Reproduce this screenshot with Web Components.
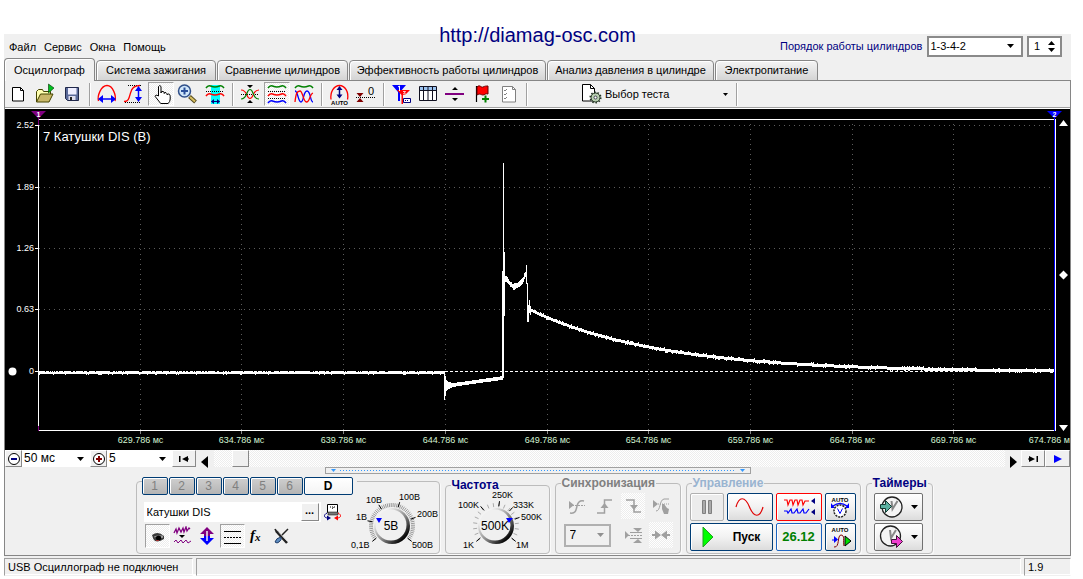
<!DOCTYPE html>
<html lang="ru">
<head>
<meta charset="utf-8">
<title>Осциллограф</title>
<style>
  body { margin: 0; padding: 34px 12px 5px 4px; background: #fff; font: 11px/13px "Liberation Sans", Arial, sans-serif; color: #000; }
</style>
</head>
<body>
<osc-app></osc-app>
<script>
const BASE = `
  *, *::before, *::after { box-sizing: border-box; }
  button, input, select { font: inherit; color: inherit; margin: 0; padding: 0; border: 0; background: none; border-radius: 0; outline: 0; }
  svg { display: block; }
  .dither { background: conic-gradient(#fff 25%, #ededed 0 50%, #fff 0 75%, #ededed 0) 0 0 / 2px 2px; }
`;
function define(name, css, html, setup) {
  const tpl = document.createElement('template');
  tpl.innerHTML = `<style>${BASE}${css}</style>${html}`;
  customElements.define(name, class extends HTMLElement {
    constructor() {
      super();
      this.attachShadow({ mode: 'open' }).append(tpl.content.cloneNode(true));
    }
    connectedCallback() {
      if (setup && !this.ready) { this.ready = true; setup(this, this.shadowRoot); }
    }
  });
}

const wave = (y, c, x = 4) => `<path d="M${x} ${y + 1}q2 -3 4.500 -2t4.500 1t4.500 -1t4.500 2" fill="none" stroke="${c}" stroke-width="1.500"/>`;
const dots = (y, x1 = 4, x2 = 22) => `<path d="M${x1} ${y}H${x2}" stroke="#000" stroke-dasharray="1 1" shape-rendering="crispEdges"/>`;
/* name: [width, height, markup] */
const ICONS = {
  new: [26, 24, `<path d="M7.500 5.500h8l3 3v10.500h-11z" fill="#fff" stroke="#000"/><path d="M15.500 5.500v3h3" fill="none" stroke="#000"/>`],
  open: [26, 24, `<path d="M4.500 20V9.500l2-2h4l1 2h7V12" fill="#ffffb0" stroke="#444400"/><path d="M4.500 20l4-8h12.500l-4 8z" fill="#c9b86a" stroke="#444400"/><path d="M16.500 2v9l5.500-5z" fill="#00c020" stroke="#003000" stroke-width=".6"/>`],
  save: [26, 24, `<path d="M6.500 5.500h13v13h-11l-2-2z" fill="#5a6a9a" stroke="#20284a"/><path d="M9 6h8.500v6.500H9z" fill="#eef"/><path d="M9.500 14h7v4h-7z" fill="#dde"/><path d="M11 15h2v3h-2z" fill="#222"/>`],
  period: [26, 24, `<path d="M4.500 19C3 14 7 3.500 13 3.500S22.500 14 21 19" fill="none" stroke="#f00" stroke-width="1.300"/><path d="M6 17H20" stroke="#00f" stroke-width="1.500"/><path d="M4 17l5-4v8zM22 17l-5-4v8z" fill="#00f"/>`],
  ampl: [26, 24, `${dots(3.5, 7, 20)}${dots(20.5, 4, 20)}<path d="M3 19.500c4.500 0 5-3 6.500-8.500s3.500-7 9.500-7.500" fill="none" stroke="#f00" stroke-width="1.300"/><path d="M17.500 6V18" stroke="#00f" stroke-width="1.500"/><path d="M17.500 4l-3.500 5h7zM17.500 20l-3.500-5h7z" fill="#00f"/>`],
  hand: [26, 24, `<path d="M10.500 14V4.500q1.200-2 2.500 0V11q0-2 2-1.500t1 2q1-1.500 2-.8t1 2q1.200-1.300 2.200-.5t1 2V17q0 2.500-2 4.500h-7.500l-5.500-7q0-2.500 3.300-.5z" fill="#fff" stroke="#000"/>`],
  zoom: [26, 24, `<path d="M14.500 14.500l6 5.500" stroke="#544a20" stroke-width="4"/><path d="M15 15l5 4.500" stroke="#d8c060" stroke-width="2"/><circle cx="9.500" cy="9" r="6" fill="#cfe6fa" stroke="#30508a" stroke-width="1.500"/><path d="M6 9h7M9.500 5.500v7" stroke="#2a4f9a" stroke-width="2"/>`],
  range: [26, 24, `<path d="M9 3h9v19H9z" fill="#0ff"/>${wave(5, '#008000')}${dots(9.5)}${wave(13, '#f00')}<path d="M9.500 19.500h8" stroke="#000080"/><path d="M9 19.500l3-2.500v5zM18 19.500l-3-2.500v5z" fill="#000080"/>`],
  merge: [26, 24, `${dots(12.5)}<path d="M4 8c7 0 5 8.500 9 8.500s2-8.500 9-8.500" fill="none" stroke="#f00" stroke-width="1.200"/><path d="M4 17c7 0 5-9.500 9-9.500s2 9.500 9 9.500" fill="none" stroke="#008000" stroke-width="1.200"/><path d="M10 3h6l-3 3zM10 21h6l-3-3z"/>`],
  split: [26, 24, `${wave(5, '#008000')}${dots(9.5)}${wave(13, '#f00')}${dots(16.5)}${wave(20, '#00f')}`],
  overlay: [26, 24, `${wave(5, '#008000')}<path d="M4 9c3 0 3 11 6 11s2-11 6-11 3 11 6 11" fill="none" stroke="#00f" stroke-width="1.300"/><path d="M4 20c1-9 2-11 5-11s3 11 6.500 11 3-8 6.500-9" fill="none" stroke="#f00" stroke-width="1.300"/>`],
  auto: [26, 24, `<path d="M5 17.500C4 10 8 3.500 13.500 3.500S23 10 21.500 17.500" fill="none" stroke="#f00" stroke-width="1.300"/><path d="M13.500 6v9" stroke="#000080" stroke-width="1.500"/><path d="M13.500 4l-3 4h6zM13.500 16.500l-3-4h6z" fill="#000080"/><text x="13.500" y="22.500" font-size="6" font-weight="bold" text-anchor="middle">AUTO</text>`],
  zero: [26, 24, `<path d="M3.500 11h7l-3.500 4zM3.500 20h7l-3.500-4z" fill="#800000"/>${dots(15.5, 3, 22)}<text x="15" y="13" font-size="11">0</text>`],
  marks: [26, 24, `<path d="M4 3h14l-6 7v9h-2v-9z" fill="#00f"/><path d="M9 8h13l-5 5h-2v9h-1.500v-9z" fill="#f00"/><path d="M10 5l1.500-1v5" stroke="#fff" fill="none"/><path d="M15 9.500h2.500l-2 2.500h2.500" stroke="#fff" fill="none" stroke-width=".8"/><path d="M15.500 16.500h7v4h-7z" fill="#fff" stroke="#000080"/><path d="M17 18.500h4" stroke="#000080" stroke-dasharray="1 1"/>`],
  table: [26, 24, `<path d="M4.500 4.500h17v14h-17z" fill="#fff" stroke="#101020"/><path d="M5 5h16v3H5z" fill="#9cc4f0"/><path d="M5 8.500h16M8.500 5v13M13 5v13M17.500 5v13" stroke="#101020" fill="none"/>`],
  divider: [26, 24, `<path d="M3 12h19" stroke="#800080" stroke-width="2"/><path d="M10 8h6l-3-3zM10 16h6l-3 3z"/>`],
  flag: [26, 24, `<path d="M7.500 4v16" stroke="#000" stroke-width="1.200"/><path d="M8 5c3-3 4 1 6 0s3-1 5-1v8c-3-1-3 1-5 1s-3-2-6 0z" fill="#f00" stroke="#600"/><path d="M13 17h7M16.500 13.500v7" stroke="#008000" stroke-width="2"/>`],
  list: [26, 24, `<path d="M6.500 4.500h10l3 3v12.500h-13z" fill="#fff" stroke="#808080"/><path d="M16.500 4.500v3h3" fill="none" stroke="#808080"/><path d="M8 8l1 1 2-2M8 12l1 1 2-2M8 16l1 1 2-2" fill="none" stroke="#808080"/>`],
  test: [22, 22, `<path d="M2.500 1.500h8l4 4v12.500h-12z" fill="#fff" stroke="#000"/><path d="M10.500 1.500v4h4" fill="none" stroke="#000"/><circle cx="15.500" cy="14.500" r="4.500" fill="#b8d0b0" stroke="#223322" stroke-width="1"/><circle cx="15.500" cy="14.500" r="5.300" fill="none" stroke="#223322" stroke-width="1.500" stroke-dasharray="1.500 1.800"/><circle cx="15.500" cy="14.500" r="1.500" fill="#fff" stroke="#445"/>`],
  down: [7, 4, `<path d="M0 0h7L3.500 4z"/>`],
  downs: [5, 3, `<path d="M0 0h5L2.500 3z"/>`],
  up: [7, 4, `<path d="M0 4h7L3.500 0z"/>`],
  minus: [16, 16, `<circle cx="8" cy="8" r="5.500" fill="#fff" stroke="#000"/><path d="M5 8h6" stroke="#000080" stroke-width="2"/>`],
  plus: [16, 16, `<circle cx="8" cy="8" r="5.500" fill="#fff" stroke="#000"/><path d="M5 8h6M8 5v6" stroke="#800000" stroke-width="2"/>`],
  first: [12, 8, `<path d="M1 1h1.500v6H1zM10 1v6L4 4zM10 3.500h1v1h-1z"/>`],
  last: [12, 8, `<path d="M9.500 1H11v6H9.500zM2 1v6l6-3zM1 3.500h1v1H1z"/>`],
  left: [8, 12, `<path d="M7 0v12L0 6z"/>`],
  right: [8, 12, `<path d="M1 0v12l7-6z"/>`],
  run: [8, 8, `<path d="M0 0v8l8-4z" fill="#00f"/>`],
  swap: [20, 20, `<path d="M4.500 2.500h10v8h-10z" fill="#fff" stroke="#000"/><path d="M5 10h10v3H5z" fill="#777" stroke="#000" stroke-width=".5"/><path d="M7 5h5M9 7l2-2" stroke="#000" stroke-dasharray="1 1"/><path d="M4 11c-4 2-3 5 1 5" stroke="#000080" fill="none"/><path d="M4 13.500v5l4-2.500z" fill="#000080"/><path d="M15 11c4 2 3 5-1 5" stroke="#f00" fill="none"/><path d="M15 13.500v5l-4-2.500z" fill="#f00"/>`],
  eye: [24, 22, `<path d="M7 10q6-4.500 12 1v3q-5 3.500-9 2-2-1.500-3-6z" fill="#3c3c3c"/><path d="M9 12q4-2 9-1" stroke="#999" fill="none"/><circle cx="13.500" cy="13" r="2.500" fill="#000"/><path d="M11 15.500h3" stroke="#a03030"/><path d="M16 12h2" stroke="#ddd"/>`],
  noise: [20, 20, `<path d="M2 7l2-4 1 4 2-5 2 4 2-4 1 4 2-5 1 4 2-3 1 1" fill="none" stroke="#800080" stroke-width="1.300"/><path d="M7 9h6l-3 3z"/><path d="M2 16l2-2 2 3 3-3 2 3 3-3 2 3 3-2" fill="none" stroke="#800080"/>`],
  updown: [20, 20, `<path d="M10 1l7 7h-4v2H7V8H3z" fill="#800080"/><path d="M10 19l7-7h-4v-2H7v2H3z" fill="#00f"/><path d="M10 5v10" stroke="#f0f0f0" stroke-width="1.500"/>`],
  lines: [24, 22, `<path d="M4 6.500h17M4 18.500h17" stroke="#000"/><path d="M4 12.500h17" stroke="#000" stroke-dasharray="2 1"/>`],
  fx: [20, 20, `<text x="3" y="14" font-family="Liberation Serif, serif" font-size="15" font-weight="bold" font-style="italic">f</text><text x="8" y="15" font-family="Liberation Serif, serif" font-size="11" font-weight="bold" font-style="italic">x</text>`],
  tools: [20, 20, `<path d="M4 5l11 12" stroke="#222" stroke-width="2.500"/><path d="M3 3q1 3 4 3M16 3l-8 8" stroke="#222" fill="none" stroke-width="1.500"/><path d="M5 4l10 11" stroke="#ccc"/><path d="M9 11q-5 1-6 5 2 2 4 0 3-2 2-5z" fill="#5c8cc0" stroke="#24406a"/>`],
  s1: [20, 20, `<g fill="none" stroke="#a0a0a0"><path d="M3 9.500h16" stroke-dasharray="2 1"/><path d="M4 17c6 1 6-3 7-7s3-6 7-5" stroke-width="1.500"/></g><path d="M3 5v8l5-4z" fill="#a0a0a0"/>`],
  s2: [20, 20, `<path d="M3 17h7.500V4H18" stroke="#a0a0a0" fill="none" stroke-width="1.500"/><path d="M10.500 7l-4 5h8z" fill="#a0a0a0"/>`],
  s3: [24, 22, `<path d="M5 5h8v12h7" stroke="#a0a0a0" fill="none" stroke-width="1.500"/><path d="M13 15l-4-5h8z" fill="#a0a0a0"/>`],
  s4: [20, 20, `<path d="M2 4v8l5-4z" fill="#a0a0a0"/><path d="M5 8h14" stroke="#a0a0a0" stroke-dasharray="1 1"/><path d="M5 15c5 0 3-11 8-12h5" fill="none" stroke="#a0a0a0"/><path d="M11 8l2 0 3 4 2 1-1 5-4 0-2-5z" fill="#a0a0a0"/>`],
  s5: [20, 20, `<path d="M10 3h9l-4 4zM10 18h9l-4-4z" fill="#a0a0a0"/><path d="M2 6v8l4-4z" fill="#a0a0a0"/><path d="M5 10.500h14" stroke="#a0a0a0" stroke-dasharray="2 1"/><path d="M7 7.500h12M7 13.500h12" stroke="#a0a0a0"/>`],
  s6: [24, 22, `<path d="M3 11h8M21 11h-8" stroke="#a0a0a0" stroke-width="2"/><path d="M6 6.500v9l6-4.500zM18 6.500v9l-6-4.500z" fill="#a0a0a0"/>`],
  pause: [14, 18, `<path d="M2.500 2.500h3v13h-3zM8.500 2.500h3v13h-3z" fill="#aaa" stroke="#808080"/>`],
  sine: [32, 22, `<path d="M2 11C5 0 11 0 15.500 11S26 22 29 11" fill="none" stroke="#e00000" stroke-width="1.200"/>`],
  dual: [36, 20, `<path d="M3 3h3l1 5 2-5h2l1 5 2-5h2l1 5 2-5h2l1 5 2-4h4" fill="none" stroke="#f00" stroke-width="1.200"/><path d="M3 14h3l1 2 3-4 1 4h2l3-4 1 4h2l3-4 1 4h2l3-4" fill="none" stroke="#00f" stroke-width="1.200"/><path d="M34 1v6l-4-3zM34 12v6l-4-3z" fill="#000080"/>`],
  autov: [26, 24, `<text x="13" y="7" font-size="6" font-weight="bold" text-anchor="middle">AUTO</text><path d="M6 11q7-5 14 0" stroke="#00f" fill="none" stroke-width="1.500"/><path d="M4 8v5h4zM22 8v5h-4z" fill="#00f"/><circle cx="13" cy="16" r="6" fill="#fff" stroke="#222" stroke-width="1.500" stroke-dasharray="2 1"/><path d="M10.500 13.500l2.500 5 2.500-5" stroke="#00f" fill="none"/>`],
  autos: [26, 24, `<text x="13" y="7" font-size="6" font-weight="bold" text-anchor="middle">AUTO</text><path d="M5 15h4" stroke="#00f"/><path d="M7 11v7l4-3.500z" fill="#00f"/><path d="M7 22c6 1 3-12 7-12s2 6 3 11" fill="none" stroke="#800000"/><path d="M18 11v10l6-5z" fill="#00e000" stroke="#000"/>`],
  play: [12, 20, `<path d="M1 0v20l10-10z" fill="#0f0" stroke="#22a022"/>`],
  clockin: [26, 24, `<circle cx="14" cy="12" r="10" fill="#f4f4f4" stroke="#222" stroke-width="1.300"/><path d="M13.500 6l1 8 5-8" fill="none" stroke="#888" stroke-width="2"/><path d="M2.500 9.500h5v-4l6 6-6 6v-4h-5z" fill="#5ab0a0" stroke="#103830"/>`],
  clockout: [26, 24, `<circle cx="12.500" cy="11" r="10" fill="#f4f4f4" stroke="#222" stroke-width="1.300"/><path d="M12 5l1 8 5-8" fill="none" stroke="#888" stroke-width="2"/><path d="M13.500 14.500h5v-4l6 6-6 6v-4h-5z" fill="#f040d0" stroke="#401038"/>`]
};

define('osc-icon', `:host { display: inline-block; }`, `<div></div>`, (el, r) => {
  const [w, h, body] = ICONS[el.getAttribute('name')];
  r.querySelector('div').innerHTML = `<svg width="${w}" height="${h}" viewBox="0 0 ${w} ${h}" aria-hidden="true">${body}</svg>`;
});

/* Flat toolbar button, optionally latched */
define('osc-tool', `
  :host { display: block; }
  button { display: flex; align-items: center; justify-content: center; width: 100%; height: 100%; border: 1px solid transparent; }
  :host([pressed]) button { border-color: #a0a0a0 #fff #fff #a0a0a0; background: conic-gradient(#fff 25%, #ededed 0 50%, #fff 0 75%, #ededed 0) 0 0 / 2px 2px; }
  :host([flat]) button { border-color: transparent; }
`, `<button type="button"><slot></slot></button>`, (el, r) => r.querySelector('button').setAttribute('aria-label', el.getAttribute('label') || ''));

/* Framed push button */
define('osc-push', `
  :host { display: block; }
  button { display: flex; align-items: center; justify-content: center; width: 100%; height: 100%; border: 1px solid var(--edge, #003c74); border-radius: 2px; background: var(--face, linear-gradient(#fff, #f2f2f2 50%, #dcdcdc)); box-shadow: inset 1px 1px #fff; }
`, `<button type="button"><slot></slot></button>`, (el, r) => {
  const b = r.querySelector('button');
  if (el.hasAttribute('label')) b.setAttribute('aria-label', el.getAttribute('label'));
});

define('osc-select', `
  :host { display: flex; align-items: center; gap: 5px; }
  label { color: #000080; white-space: nowrap; }
  label:empty { display: none; }
  .box { display: grid; grid-template-columns: 1fr auto; align-items: center; flex: 1; height: 100%; background: var(--face, #fff); border: var(--line, 0); }
  select { grid-area: 1 / 1 / 2 / 3; appearance: none; width: 100%; height: 100%; padding: 0 var(--pad, 2px); }
  osc-icon { grid-area: 1 / 2; margin-right: var(--arrow, 6px); pointer-events: none; fill: var(--ink, #000); }
`, `<label for="s"></label><div class="box"><select id="s"></select><osc-icon name="down"></osc-icon></div>`, (el, r) => {
  const s = r.querySelector('select');
  s.add(new Option(el.getAttribute('value')));
  r.querySelector('label').textContent = el.getAttribute('label') || '';
  if (!el.hasAttribute('label')) s.setAttribute('aria-label', el.getAttribute('hint'));
});

define('osc-spinner', `
  :host { display: flex; border: 2px solid #8a8a8a; background: #fff; }
  input { flex: 1; min-width: 0; padding-left: 5px; }
  div { display: grid; align-content: center; gap: 3px; padding-right: 5px; }
  button { display: flex; align-items: center; }
  osc-icon { display: block; }
`, `<input type="text" value="1" aria-label="Номер цилиндра"><div><button type="button" aria-label="Больше"><osc-icon name="up"></osc-icon></button><button type="button" aria-label="Меньше"><osc-icon name="down"></osc-icon></button></div>`);

define('osc-header', `
  :host { display: flex; align-items: center; height: 24px; padding: 0 9px 0 5px; position: relative; }
  nav { display: flex; gap: 8px; padding-top: 2px; flex: 1; }
  nav a { color: #000; text-decoration: none; }
  osc-select { width: 243px; height: 21px; margin-right: 4px; --line: 2px solid #8a8a8a; --arrow: 7px; --pad: 1px; }
  osc-spinner { width: 35px; height: 21px; }
  .site { position: absolute; left: 0; right: 0; top: -11px; text-align: center; pointer-events: none; font-size: 20px; line-height: 24px; color: #000080; }
  .site a { color: inherit; text-decoration: none; pointer-events: auto; }
`, `<nav><a href="#file">Файл</a><a href="#service">Сервис</a><a href="#windows">Окна</a><a href="#help">Помощь</a></nav>
<osc-select label="Порядок работы цилиндров" value="1-3-4-2"></osc-select>
<osc-spinner></osc-spinner>
<div class="site"><a href="http://diamag-osc.com">http://diamag-osc.com</a></div>`);

define('osc-tabs', `
  :host { display: grid; grid-template-columns: 91px 120px 131px 197px 167px 103px; align-items: end; height: 23px; gap: 1px; box-shadow: inset 0 -1px #868686; }
  button { height: 21px; border: 1px solid #868686; border-radius: 4px 4px 0 0; background: linear-gradient(#f4f4f4, #d4d4d4); white-space: nowrap; box-shadow: inset 1px 1px #fff; }
  button[aria-selected=true] { height: 23px; border-bottom: 0; background: #f0f0f0; }
`, `<button role="tab" aria-selected="true">Осциллограф</button><button role="tab">Система зажигания</button><button role="tab">Сравнение цилиндров</button><button role="tab">Эффективность работы цилиндров</button><button role="tab">Анализ давления в цилиндре</button><button role="tab">Электропитание</button>`);

define('osc-toolbar', `
  :host { display: flex; align-items: center; height: 28px; border-bottom: 1px solid #fff; box-shadow: inset 0 -1px #a0a0a0; padding-bottom: 1px; }
  osc-tool { width: 26px; margin-right: 1px; height: 24px; }
  i { width: 2px; height: 23px; margin: 0 3px; background: #a0a0a0; border-right: 1px solid #fff; }
  .test { display: flex; align-items: center; gap: 3px; width: 150px; height: 24px; margin-left: 49px; padding-right: 2px; white-space: nowrap; }
  .test span { flex: 1; text-align: left; }
  .test + i { margin-left: 6px; }
`, `<span id="bar" style="display:contents"></span>`, (el, r) => {
  const groups = [
    [['new', 'Новый'], ['open', 'Открыть'], ['save', 'Сохранить']],
    [['period', 'Период'], ['ampl', 'Амплитуда'], ['hand', 'Перемещение', 1], ['zoom', 'Лупа'], ['range', 'Диапазон']],
    [['merge', 'Совместить'], ['split', 'Разделить', 1], ['overlay', 'Наложить']],
    [['auto', 'Автомасштаб'], ['zero', 'Ноль']],
    [['marks', 'Маркеры'], ['table', 'Таблица'], ['divider', 'Линия'], ['flag', 'Добавить метку'], ['list', 'Отчёт']]
  ];
  r.getElementById('bar').innerHTML = groups.map(g => g.map(([n, l, p]) =>
    `<osc-tool label="${l}" ${p ? 'pressed' : ''}><osc-icon name="${n}"></osc-icon></osc-tool>`).join('') + '<i></i>').join('') +
    `<button type="button" class="test"><osc-icon name="test"></osc-icon><span>Выбор теста</span><osc-icon name="downs"></osc-icon></button><i></i>`;
});

/* Signal screen: the drawing units run from (5,109) to (1070,450) */
define('osc-plot', `
  :host { display: block; background: #000; }
  svg { width: 100%; height: auto; }
  text { font-family: "Liberation Sans", Arial, sans-serif; font-size: 9px; fill: #fff; }
  .x { fill: #d4f4d4; text-anchor: middle; }
  .y, .x.last { text-anchor: end; }
  .name { font-size: 13px; }
  .flag { font-size: 7px; font-weight: bold; text-anchor: middle; }
  .px { shape-rendering: crispEdges; fill: none; }
`, `<svg viewBox="5 109 1065 341" role="img" aria-label="Катушки DIS"><g id="grid"></g><path id="sig" class="px" stroke="#fff"/>
<path class="px" stroke="#fff" d="M38.500 119v312M38 119.500H1056M38 430.500H1056M1055.500 119V431"/>
<path class="px" stroke="#00f" d="M1054.500 112V431"/>
<path class="px" stroke="#800080" d="M38.500 112v13M38.500 426v5"/>
<path d="M31 111h15l-7 7h-1z" fill="#800080"/><path d="M1047 111h15l-7 7h-1z" fill="#00f"/>
<text class="flag" x="38.500" y="117">1</text><text class="flag" x="1054.500" y="117">2</text>
<path d="M1059 126h9l-4.500-6zM1059 425h9l-4.500 6zM1059 275l4.500-4.500 4.500 4.500-4.500 4.500z" fill="#fff"/>
<circle cx="12.500" cy="371.500" r="4" fill="#fff"/>
<text class="name" x="43" y="141">7 Катушки DIS (В)</text></svg>`, (el, r) => {
  const xs = [140, 241, 343, 445, 547, 648, 750, 852, 953];
  const ys = [[125, '2.52'], [187, '1.89'], [248, '1.26'], [309, '0.63'], [371, '0']];
  let g = '';
  ys.forEach(([y, t]) => {
    g += `<text class="y" x="34" y="${y + 3}">${t}</text><path class="px" stroke="#fff" d="M35 ${y}.500h3"/>`;
    if (y < 371) g += `<path class="px" stroke="#5c5c5c" stroke-dasharray="1 4" d="M39 ${y}.500H1054"/>`;
  });
  g += `<path class="px" stroke="#fff" stroke-dasharray="3 2" d="M445 371.500H1054"/>`;
  xs.forEach((x, i) => {
    g += `<text class="x" x="${x}.500" y="443">${(629.786 + 5 * i).toFixed(3)} мс</text>`;
    g += `<path class="px" stroke="#5c5c5c" stroke-dasharray="1 4" d="M${x}.500 124V430"/><path class="px" stroke="#888" d="M${x}.500 431v3"/>`;
  });
  g += `<text class="x last" x="1070" y="443">674.786 м</text>`;
  r.getElementById('grid').innerHTML = g;

  let seed = 7;
  const rnd = () => (seed = (seed * 16807) % 2147483647) / 2147483647;
  let d = '';
  const bar = (x, a, b) => { d += `M${x}.500 ${Math.round(a)}V${Math.round(b)}`; };
  for (let x = 39; x < 444; x++) bar(x, 371 + (rnd() > .8), 374 + (rnd() > .9));
  bar(444, 371, 400);
  for (let x = 445; x < 503; x++) {
    const c = 386 - (x - 445) * .14, a = 1.8 + 8 * Math.exp(-(x - 445) / 3) * (.6 + .4 * rnd());
    bar(x, c - a, c + a);
  }
  bar(502, 271, 378); bar(503, 163, 378); bar(504, 252, 316);
  for (let x = 505; x < 526; x++) {
    const c = x < 514 ? 279 + (x - 505) : x < 522 ? 287 - (x - 514) * .6 : 282 - (x - 522) * 2.5;
    bar(x, c - 2 - 2 * rnd(), c + 2 + rnd());
  }
  bar(526, 265, 284); bar(527, 283, 322); bar(528, 305, 322); bar(529, 300, 313); bar(530, 306, 315);
  for (let x = 531; x < 1054; x++) {
    const c = 372 - 62 * Math.exp(-(x - 530) / 130);
    bar(x, c - 1.5 - (rnd() > .85), c + 1.5 + (rnd() > .85));
  }
  r.getElementById('sig').setAttribute('d', d);
});

define('osc-scroll', `
  :host { display: flex; height: 17px; background: #fff; }
  osc-select { font-size: 12px; }
  button { display: flex; align-items: center; justify-content: center; background: #f0f0f0; border: 1px solid; border-color: #fff #888 #888 #fff; }
  .track { flex: 1; display: flex; }
  .flat { border-color: transparent; padding-top: 6px; width: 16px; }
`, `<button style="width:17px" aria-label="Медленнее"><osc-icon name="minus"></osc-icon></button>
<osc-select value="50  мс" hint="Развёртка" style="width:68px"></osc-select>
<button style="width:17px" aria-label="Быстрее"><osc-icon name="plus"></osc-icon></button>
<osc-select value="5" hint="Усиление" style="width:65px"></osc-select>
<button style="width:24px" aria-label="В начало"><osc-icon name="first"></osc-icon></button>
<button class="flat" style="width:18px" aria-label="Влево"><osc-icon name="left"></osc-icon></button>
<div class="track dither"><button style="width:17px;margin-left:18px" aria-label="Положение"></button></div>
<button class="flat" aria-label="Вправо"><osc-icon name="right"></osc-icon></button>
<button style="width:24px" aria-label="В конец"><osc-icon name="last"></osc-icon></button>
<button style="width:25px" aria-label="Следить"><osc-icon name="run"></osc-icon></button>`);

define('osc-splitter', `
  :host { display: flex; align-items: center; justify-content: space-between; width: 40%; height: 7px; margin: 0 auto; padding: 0 5px; border: 1px solid #a0a0a0; fill: #3399ff; }
  span { flex: 1; margin: 0 4px; height: 1px; background: repeating-linear-gradient(90deg, #3399ff 0 1px, transparent 1px 3px); }
`, `<osc-icon name="downs"></osc-icon><span></span><osc-icon name="downs"></osc-icon>`);

define('osc-group', `
  :host { display: block; }
  fieldset { margin: 0; min-width: 0; border: 1px solid #bcbcbc; border-radius: 4px; padding: 3px 0 2px; box-shadow: 1px 1px #fafafa; }
  legend { margin-left: 5px; padding: 0 1px; font: bold 12px/14px "Liberation Sans", Arial, sans-serif; color: var(--title, #000080); }
`, `<fieldset><legend></legend><slot></slot></fieldset>`, (el, r) => {
  const l = r.querySelector('legend');
  if (el.hasAttribute('label')) l.textContent = el.getAttribute('label'); else l.remove();
});

/* Rotary knobs; drawing units start at the given origin */
define('osc-knob', `:host { display: block; } svg { overflow: visible; } text { font: 9px "Liberation Sans", Arial, sans-serif; }`, `<div></div>`, (el, r) => {
  const volt = el.getAttribute('kind') === 'volt';
  const cx = volt ? 392 : 496, cy = 527;
  const labels = volt
    ? [['0,1B', 351, 549], ['1B', 356, 521], ['10B', 366, 504], ['100B', 399, 501], ['200B', 417, 518], ['500B', 412, 549]]
    : [['1K', 463, 549], ['100K', 458, 509], ['250K', 492, 499], ['333K', 513, 509], ['500K', 521, 521], ['1M', 516, 549]];
  const major = volt ? [218, 168, 122, 72, 20, -38] : [218, 128, 82, 48, 20, -38];
  const tick = (a, r1, r2, c) => {
    const k = a * Math.PI / 180, x = Math.cos(k), y = -Math.sin(k);
    return `<path d="M${(cx + r1 * x).toFixed(1)} ${(cy + r1 * y).toFixed(1)}L${(cx + r2 * x).toFixed(1)} ${(cy + r2 * y).toFixed(1)}" stroke="${c}"/>`;
  };
  let s = '';
  for (let a = -38; a <= 218; a += volt ? 5 : 15) s += tick(a, 19, 23, volt ? '#999' : '#aaa');
  major.forEach(a => { s += tick(a, 20, 25, '#000'); });
  labels.forEach(([t, x, y]) => { s += `<text x="${x}" y="${y}">${t}</text>`; });
  const g = volt ? 'gv' : 'gf';
  r.querySelector('div').innerHTML = `<svg width="${volt ? 88 : 103}" height="56" viewBox="${volt ? 351 : 446} 496 ${volt ? 88 : 103} 56">
    <defs><linearGradient id="${g}" x1="0" y1="0" x2="1" y2="1"><stop offset=".2" stop-color="#f4f4f4"/><stop offset=".55" stop-color="#888"/><stop offset=".85" stop-color="#000"/></linearGradient></defs>
    ${s}<circle cx="${cx}" cy="${cy}" r="18" fill="url(#${g})"/><circle cx="${cx - 1}" cy="${cy - 1}" r="15.500" fill="#f0f0f0"/>
    <path d="${volt ? 'M376 519h6l-3 5z' : 'M506 519h7l-4 5z'}" fill="#00f"/>
    <text x="${cx - 1}" y="${cy + 4}" text-anchor="middle" style="font-size:12px">${volt ? '5B' : '500K'}</text></svg>`;
});

define('osc-channel', `
  :host { display: block; }
  .keys { display: flex; gap: 1px; width: 215px; height: 18px; margin: -8px 0 0 5px; background: #f0f0f0; }
  .keys osc-push { width: 26px; color: #808080; font-size: 12px; --face: linear-gradient(#cfcfcf, #b4b4b4); }
  .keys osc-push:last-child { width: 49px; color: #000; font-weight: bold; --face: linear-gradient(#fff, #f4f4f4); }
  .body { display: flex; justify-content: space-between; }
  .name { display: flex; align-items: center; margin: 7px 0 0 7px; }
  .field { display: flex; align-items: center; width: 177px; height: 20px; background: #fff; padding: 0 2px 0 3px; }
  input { flex: 1; min-width: 0; }
  .more { width: 18px; height: 18px; border: 1px solid; border-color: #fff #888 #888 #fff; background: #f0f0f0; font-weight: bold; line-height: 10px; padding-bottom: 4px; }
  .name osc-tool { width: 24px; height: 20px; }
  .row { display: flex; margin: 2px 0 0 8px; }
  .row osc-tool { width: 25px; height: 24px; }
`, `<div class="keys"><osc-push>1</osc-push><osc-push>2</osc-push><osc-push>3</osc-push><osc-push>4</osc-push><osc-push>5</osc-push><osc-push>6</osc-push><osc-push>D</osc-push></div>
<div class="body"><div>
<div class="name"><div class="field"><input type="text" value="Катушки DIS" aria-label="Имя канала"><button class="more" aria-label="Выбрать">...</button></div><osc-tool label="Калибровка"><osc-icon name="swap"></osc-icon></osc-tool></div>
<div class="row"><osc-tool pressed label="Видимость"><osc-icon name="eye"></osc-icon></osc-tool><osc-tool label="Фильтр"><osc-icon name="noise"></osc-icon></osc-tool><osc-tool label="Инверсия"><osc-icon name="updown"></osc-icon></osc-tool><osc-tool pressed label="Линии"><osc-icon name="lines"></osc-icon></osc-tool><osc-tool label="Функция"><osc-icon name="fx"></osc-icon></osc-tool><osc-tool label="Настройки"><osc-icon name="tools"></osc-icon></osc-tool></div>
</div><osc-knob kind="volt"></osc-knob></div>`);

define('osc-sync', `
  :host { display: grid; grid-template-columns: repeat(4, 24px); justify-content: space-between; gap: 3px 4px; padding: 0 6px 3px 8px; }
  osc-tool { height: 26px; }
  osc-select { grid-column: span 2; height: 23px; width: 47px; font-size: 12px; align-self: center; --line: 2px solid #b0b0b0; --face: #f0f0f0; --ink: #909090; --pad: 4px; --arrow: 5px; }
`, `<osc-tool label="Уровень"><osc-icon name="s1"></osc-icon></osc-tool><osc-tool label="Фронт"><osc-icon name="s2"></osc-icon></osc-tool><osc-tool pressed flat label="Спад"><osc-icon name="s3"></osc-icon></osc-tool><osc-tool label="Вручную"><osc-icon name="s4"></osc-icon></osc-tool>
<osc-select value="7" hint="Канал синхронизации"></osc-select><osc-tool label="Порог"><osc-icon name="s5"></osc-icon></osc-tool><osc-tool pressed flat label="Центр"><osc-icon name="s6"></osc-icon></osc-tool>`);

define('osc-control', `
  :host { display: grid; grid-template-columns: 34px 46px 46px 31px; grid-auto-rows: 28px; gap: 2px 3px; padding: 0 0 0 3px; font: bold 12px/14px "Liberation Sans", Arial, sans-serif; }
  .start { grid-column: span 2; }
  .start osc-icon { margin-right: 19px; }
  .val { --edge: #1c64c0; --face: #f0f0f0; color: #008000; font-size: 13px; }
`, `<osc-push label="Пауза" style="--edge:#b0b0b0;--face:#ececec"><osc-icon name="pause"></osc-icon></osc-push>
<osc-push label="Сигнал"><osc-icon name="sine"></osc-icon></osc-push>
<osc-push label="Непрерывно" style="--edge:#f00"><osc-icon name="dual"></osc-icon></osc-push>
<osc-push label="Автодиапазон"><osc-icon name="autov"></osc-icon></osc-push>
<osc-push class="start"><osc-icon name="play"></osc-icon>Пуск</osc-push><osc-push class="val">26.12</osc-push>
<osc-push label="Автозапуск"><osc-icon name="autos"></osc-icon></osc-push>`);

define('osc-timers', `
  :host { display: grid; grid-auto-rows: 28px; gap: 2px; padding: 0 9px 0 7px; --edge: #707070; }
  osc-icon + osc-icon { margin-left: 7px; }
`, `<osc-push label="Таймер запуска"><osc-icon name="clockin"></osc-icon><osc-icon name="down"></osc-icon></osc-push><osc-push label="Таймер остановки"><osc-icon name="clockout"></osc-icon><osc-icon name="down"></osc-icon></osc-push>`);

define('osc-status', `
  :host { display: grid; grid-template-columns: 189px 1fr 47px; gap: 3px; padding-top: 2px; height: 18px; }
  div { border: 1px solid; border-color: #a0a0a0 #fff #f0f0f0 #a0a0a0; padding: 1px 3px; line-height: 14px; }
`, `<div>USB Осциллограф не подключен</div><div></div><div>1.9</div>`);

define('osc-app', `
  :host { display: block; background: #f0f0f0; }
  .panel { border: 1px solid #868686; border-top: 0; }
  .groups { display: flex; justify-content: center; align-items: flex-end; gap: 5px; padding: 2px 7px 1px 0; }
`, `<osc-header></osc-header><osc-tabs></osc-tabs>
<div class="panel"><osc-toolbar></osc-toolbar><osc-plot></osc-plot><osc-scroll></osc-scroll><osc-splitter></osc-splitter>
<div class="groups">
<osc-group style="width:304px"><osc-channel></osc-channel></osc-group>
<osc-group label="Частота" style="width:105px"><osc-knob></osc-knob></osc-group>
<osc-group label="Синхронизация" style="width:126px;--title:#808080"><osc-sync></osc-sync></osc-group>
<osc-group label="Управление" style="width:175px;--title:#99b4d1"><osc-control></osc-control></osc-group>
<osc-group label="Таймеры" style="width:67px"><osc-timers></osc-timers></osc-group>
</div></div>
<osc-status></osc-status>`);
</script>
</body>
</html>
